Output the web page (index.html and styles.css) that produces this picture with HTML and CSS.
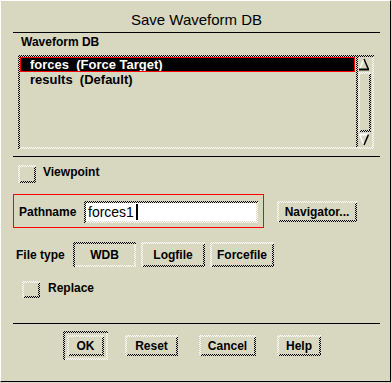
FILE: index.html
```html
<!DOCTYPE html>
<html lang="en">
<head>
    <meta charset="UTF-8">
    <title>Save Waveform DB</title>
    <link rel="stylesheet" href="styles.css">
</head>
<body>
    <div class="dialog">
        <div class="title">Save Waveform DB</div>
        <div class="rule"></div>

        <div class="group-label">Waveform DB</div>
        <div class="listbox sunken">
            <div class="list">
                <div class="item selected">forces  (Force Target)</div>
                <div class="item">results  (Default)</div>
            </div>
            <div class="scrollbar">
                <svg class="arrow" width="16" height="15" viewBox="0 0 16 15">
                    <line x1="8" y1="2" x2="3.5" y2="12.5" stroke="#fff" stroke-width="1.5"/>
                    <line x1="8" y1="2" x2="12.5" y2="12.5" stroke="#000" stroke-width="1.5"/>
                    <line x1="3" y1="12.5" x2="13" y2="12.5" stroke="#000" stroke-width="2"/>
                </svg>
                <div class="slider raised"></div>
                <svg class="arrow" width="16" height="15" viewBox="0 0 16 15">
                    <line x1="3" y1="2.5" x2="13" y2="2.5" stroke="#fff" stroke-width="2"/>
                    <line x1="3.5" y1="2.5" x2="8" y2="13" stroke="#fff" stroke-width="1.5"/>
                    <line x1="12.5" y1="2.5" x2="8" y2="13" stroke="#000" stroke-width="1.5"/>
                </svg>
            </div>
        </div>
        <div class="rule rule-list"></div>

        <div class="check-row viewpoint">
            <span class="check raised"></span>
            <span class="check-label">Viewpoint</span>
        </div>

        <div class="path-row">
            <div class="path-box">
                <span class="path-label">Pathname</span>
                <div class="field sunken">forces1<span class="cursor"></span></div>
            </div>
            <div class="btn raised nav">Navigator...</div>
        </div>

        <div class="type-row">
            <span class="type-label">File type</span>
            <div class="btn sunken type-btn">WDB</div>
            <div class="btn raised type-btn">Logfile</div>
            <div class="btn raised type-btn">Forcefile</div>
        </div>

        <div class="check-row replace">
            <span class="check raised"></span>
            <span class="check-label">Replace</span>
        </div>

        <div class="rule rule-bottom"></div>

        <div class="actions">
            <div class="default-ring sunken">
                <div class="btn raised ok">OK</div>
            </div>
            <div class="btn raised reset">Reset</div>
            <div class="btn raised cancel">Cancel</div>
            <div class="btn raised help">Help</div>
        </div>
    </div>
</body>
</html>
```

FILE: styles.css
```css
body {
    margin: 0;
    background: #d8d7c0;
    font-family: "Liberation Sans", Arial, sans-serif;
    color: #000;
}
.dialog {
    width: 391px;
    height: 382px;
    box-sizing: border-box;
    border-top: 1px solid #fff;
    border-left: 1px solid #fff;
    border-right: 1px solid #000;
    border-bottom: 1px solid #000;
    padding: 10px 10px 0 12px;
    display: flex;
    flex-direction: column;
    align-items: flex-start;
}

/* dithered 3d edges */
.raised, .sunken {
    background-color: #d8d7c0;
    background-size: 2px 2px;
    background-repeat: repeat-x, repeat-y, repeat-x, repeat-y;
    background-position: left top, left top, left bottom, right top;
}
.raised {
    background-image:
        repeating-conic-gradient(#fff 0 25%, #d8d7c0 0 50%),
        repeating-conic-gradient(#fff 0 25%, #d8d7c0 0 50%),
        repeating-conic-gradient(#000 0 25%, #d8d7c0 0 50%),
        repeating-conic-gradient(#000 0 25%, #d8d7c0 0 50%);
}
.sunken {
    background-image:
        repeating-conic-gradient(#000 0 25%, #d8d7c0 0 50%),
        repeating-conic-gradient(#000 0 25%, #d8d7c0 0 50%),
        repeating-conic-gradient(#fff 0 25%, #d8d7c0 0 50%),
        repeating-conic-gradient(#fff 0 25%, #d8d7c0 0 50%);
}

.title {
    align-self: stretch;
    text-align: center;
    font-size: 15px;
    line-height: 17px;
}
.rule {
    align-self: stretch;
    height: 1px;
    background: #000;
    margin-top: 4px;
}
.rule-list {
    margin-top: 7px;
}
.rule-bottom {
    margin-top: 25px;
}
.group-label {
    font-size: 12px;
    font-weight: bold;
    line-height: 14px;
    margin: 2px 0 0 8px;
}

.listbox {
    width: 356px;
    height: 94px;
    box-sizing: border-box;
    margin: 6px 0 0 5px;
    padding: 2px;
    display: flex;
    gap: 1px;
}
.list {
    width: 335px;
}
.item {
    height: 15px;
    line-height: 15px;
    padding-left: 10px;
    font-size: 13px;
    font-weight: bold;
    white-space: pre;
}
.item.selected {
    background: #000;
    color: #fff;
    outline: 1px solid #f00;
    outline-offset: -1px;
}
.scrollbar {
    width: 16px;
    display: flex;
    flex-direction: column;
    background-image: repeating-conic-gradient(#000 0 25%, #d8d7c0 0 50%);
    background-size: 2px 2px;
    background-repeat: repeat-y;
}
.arrow {
    display: block;
    flex: none;
}
.slider {
    flex: 1;
    margin: 0 1px 0 2px;
}

.check-row {
    display: flex;
    align-items: flex-start;
    gap: 7px;
}
.check {
    width: 18px;
    height: 18px;
}
.check-label {
    font-size: 12px;
    font-weight: bold;
    line-height: 15px;
}
.viewpoint {
    margin: 8px 0 0 5px;
}
.replace {
    margin: 14px 0 0 9px;
    gap: 8px;
}
.replace .check {
    height: 17px;
}

.path-row {
    display: flex;
    align-items: flex-start;
    gap: 13px;
    margin-top: 11px;
}
.path-box {
    width: 251px;
    height: 34px;
    box-sizing: border-box;
    border: 1px solid #f00;
    padding: 6px 0 0 5px;
    display: flex;
    align-items: flex-start;
}
.path-label {
    width: 65px;
    font-size: 12px;
    font-weight: bold;
    line-height: 14px;
    margin-top: 4px;
}
.field {
    width: 174px;
    height: 22px;
    box-sizing: border-box;
    padding: 2px 0 0 4px;
    background-color: #fff;
    font-size: 14px;
    line-height: 18px;
    display: flex;
    align-items: flex-start;
}
.cursor {
    width: 2px;
    height: 16px;
    background: #000;
    margin: 1px 0 0 2px;
}

.btn {
    box-sizing: border-box;
    height: 21px;
    font-size: 12px;
    font-weight: bold;
    line-height: 14px;
    display: flex;
    align-items: center;
    justify-content: center;
}
.nav {
    width: 80px;
    margin-top: 7px;
}

.type-row {
    display: flex;
    align-items: center;
    gap: 5px;
    margin: 14px 0 0 3px;
}
.type-label {
    width: 52px;
    font-size: 12px;
    font-weight: bold;
    line-height: 14px;
}
.type-btn {
    width: 64px;
    height: 25px;
}
.type-btn:first-of-type {
    width: 63px;
}

.actions {
    display: flex;
    align-items: center;
    gap: 21px;
    margin: 7px 0 0 50px;
}
.default-ring {
    width: 45px;
    height: 29px;
    box-sizing: border-box;
    padding: 4px;
    margin-right: -4px;
}
.ok {
    width: 37px;
}
.reset {
    width: 53px;
}
.cancel {
    width: 57px;
}
.help {
    width: 44px;
}
```
